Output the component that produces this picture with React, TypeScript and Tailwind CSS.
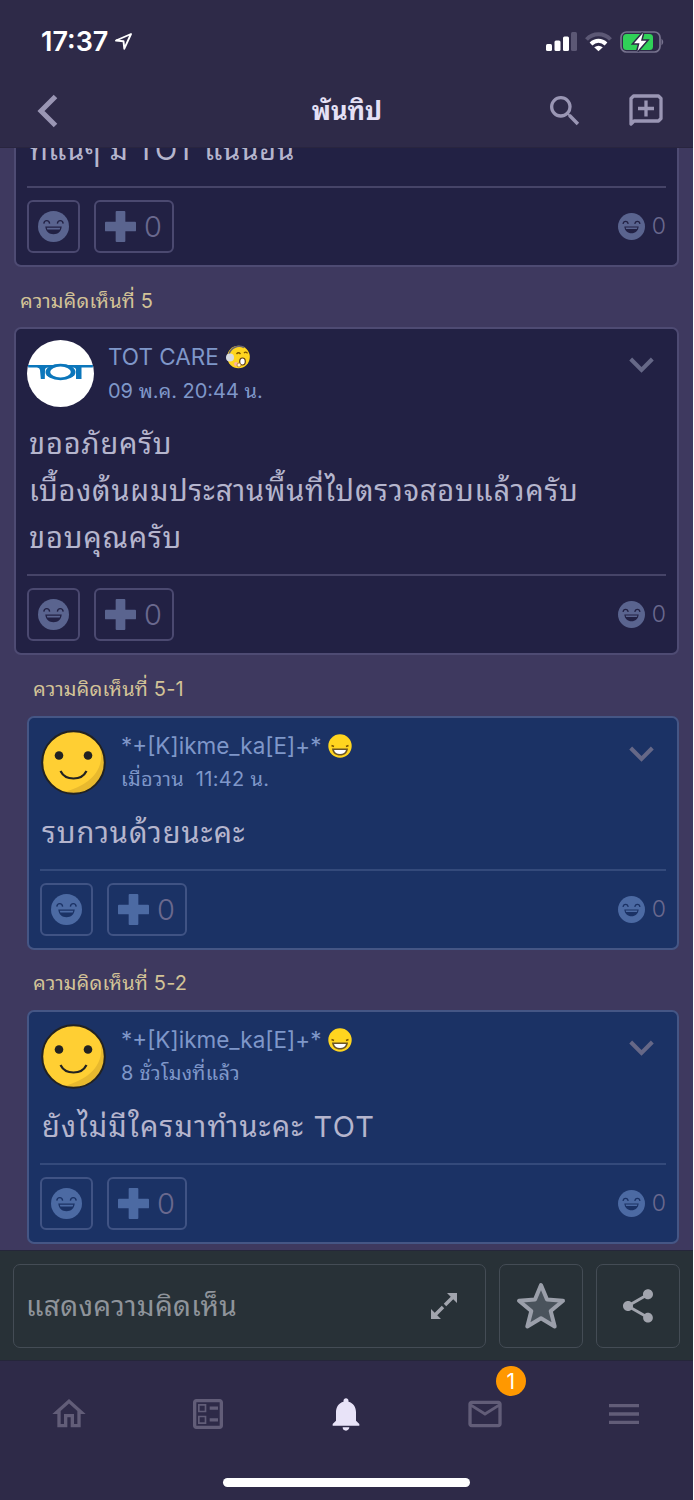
import type { ReactNode } from 'react';
import {
  MdExpandMore,
  MdMailOutline,
  MdMenu,
  MdNotifications,
  MdOutlineBallot,
  MdOutlineHome,
  MdSearch,
  MdShare,
} from 'react-icons/md';

type CommentProps = {
  label: string;
  name: string;
  time: string;
  lines: string[];
  avatar: ReactNode;
  badge: ReactNode;
  bodyClass: string;
  reply?: boolean;
};

function LaughIcon({ size, reply }: { size: number; reply?: boolean }) {
  const face = reply ? '#4c6aa3' : '#5a648f';
  const ink = reply ? '#1b3265' : '#222144';
  return (
    <svg width={size} height={size} viewBox="0 0 32 32" fill="none">
      <circle cx="16" cy="16" r="16" fill={face} />
      <path d="M6 13c.4-4 5.600-4 6 0M20 13c.4-4 5.600-4 6 0" stroke={ink} strokeWidth="1.400" />
      <path d="M7.500 16h17c-.5 5.200-4 8-8.500 8s-8-2.800-8.500-8z" fill={ink} />
      <path d="M9 17.300h14l-.6 1.800H9.600z" fill={face} />
    </svg>
  );
}

function PlusIcon({ reply }: { reply?: boolean }) {
  return (
    <svg width="31" height="31" viewBox="0 0 32 32" fill={reply ? '#4c6aa3' : '#5a648f'}>
      <path d="M12 0h8a1 1 0 0 1 1 1v10h10a1 1 0 0 1 1 1v8a1 1 0 0 1-1 1H21v10a1 1 0 0 1-1 1h-8a1 1 0 0 1-1-1V21H1a1 1 0 0 1-1-1v-8a1 1 0 0 1 1-1h10V1a1 1 0 0 1 1-1z" />
    </svg>
  );
}

function TotAvatar() {
  return (
    <svg width="67" height="67" viewBox="0 0 67 67">
      <circle cx="33.500" cy="33.500" r="33.500" fill="#fff" />
      <g fill="#0b76bb">
        <path d="M1 25h65l-.2 2.500H54.500V39H49V30q0-2.500-3-2.500H21q-3 0-3 2.500l-.2 9h-4L13 30q-.3-2.500-3-2.500H1.200z" />
        <ellipse cx="33.500" cy="32" rx="15" ry="8.300" />
      </g>
      <ellipse cx="33.500" cy="32" rx="10.300" ry="5.400" fill="#fff" />
    </svg>
  );
}

function SmileAvatar() {
  return (
    <svg width="67" height="67" viewBox="0 0 67 67">
      <circle cx="33.500" cy="33.500" r="31.300" fill="#ffcf33" />
      <path d="M60 18C66 42 48 57 24 63C42 68 64 55 64.500 34Q64 24 60 18z" fill="#e8b92e" />
      <circle cx="33.500" cy="33.500" r="31.300" fill="none" stroke="#222" strokeWidth="2" />
      <circle cx="19" cy="26.500" r="4.300" fill="#222" />
      <circle cx="48" cy="26.500" r="4.300" fill="#222" />
      <path d="M20.500 42c5 10 21 10 26 0" fill="none" stroke="#222" strokeWidth="2.200" />
    </svg>
  );
}

function GrinBadge() {
  return (
    <svg width="24" height="24" viewBox="0 0 24 24">
      <circle cx="12" cy="12" r="11.700" fill="#ffd51f" />
      <path d="M3.500 11.500l2.500 1M20.500 11.500l-2.500 1" stroke="#7a5200" strokeWidth="1.500" />
      <path d="M4 14.500h16c-.4 4.500-3.500 7-8 7s-7.600-2.500-8-7z" fill="#6b5526" />
      <path d="M6 16h12c-.7 2.700-2.600 4-6 4s-5.300-1.300-6-4z" fill="#fff" />
    </svg>
  );
}

function HeadsetBadge() {
  return (
    <svg width="24" height="24" viewBox="0 0 24 24">
      <circle cx="12.500" cy="12" r="11.300" fill="#ffd51f" />
      <path d="M3 9C5 2.500 12-.5 18 2.500" fill="none" stroke="#6a6470" strokeWidth="1.600" />
      <circle cx="4" cy="12.500" r="4" fill="#d8dbe2" />
      <path d="M10.500 9q2-2.500 4 0M18 8q2-2 3.500.3" fill="none" stroke="#7a5200" strokeWidth="1.300" />
      <circle cx="10" cy="19" r="2" fill="#f9b3a0" />
      <ellipse cx="16.500" cy="16.500" rx="2.800" ry="3.500" fill="#fff" stroke="#5b3a10" strokeWidth="1.200" />
      <circle cx="13" cy="20" r="2" fill="#fff0d0" stroke="#a87418" strokeWidth=".7" />
    </svg>
  );
}

function Reactions({ reply }: { reply?: boolean }) {
  const line = reply ? 'border-[#405384]' : 'border-[#4b4970]';
  return (
    <>
      <div className={`mt-[13px] h-0 border-t-2 ${reply ? 'border-[#344a7b]' : 'border-[#464468]'}`} />
      <div className="mt-3 flex h-[53px] items-center">
        <div className={`flex size-[53px] items-center justify-center rounded-[6px] border-2 ${line}`}>
          <LaughIcon size={31} reply={reply} />
        </div>
        <div className={`ml-[14px] flex h-[53px] w-[80px] items-center rounded-[6px] border-2 pl-[9px] ${line}`}>
          <PlusIcon reply={reply} />
          <span className="ml-[8px] text-[29px] leading-none font-light text-[#6a698e]">0</span>
        </div>
        <div className="ml-auto flex items-center gap-[7px]">
          <LaughIcon size={27} reply={reply} />
          <span className="text-[23px] leading-none font-light text-[#6a698e]">0</span>
        </div>
      </div>
    </>
  );
}

function Comment({ label, name, time, lines, avatar, badge, bodyClass, reply }: CommentProps) {
  return (
    <section className={reply ? 'ml-[27px]' : 'ml-[14px]'}>
      <h2 className="flex h-[60.33px] items-center pt-[7px] pl-[6px] text-[20px] tracking-[0.15px] text-[#d3c397]">
        {label}
      </h2>
      <article
        className={`rounded-[7px] border-2 px-[11px] pt-[11px] pb-3 ${
          reply ? 'border-[#455685] bg-[#1b3265]' : 'border-[#4e4b73] bg-[#222144]'
        }`}
      >
        <div className="flex h-[67px]">
          {avatar}
          <div className="ml-[14px] flex-1">
            <div className="flex h-[34px] items-center gap-[7px] text-[22.500px] text-[#7f97c9]">
              <span>{name}</span>
              {badge}
            </div>
            <div
              className={`flex h-[33px] items-center text-[20px] whitespace-pre text-[#7f97c9] ${
                reply ? 'tracking-[0.3px]' : ''
              }`}
            >
              {time}
            </div>
          </div>
          <MdExpandMore className="size-[49px] text-[#666887]" />
        </div>
        <div className={`mt-[13px] pl-[2px] text-[29px] leading-[47px] text-[#b5b5cd] ${bodyClass}`}>
          {lines.map((line) => (
            <p key={line} className="h-[47px] whitespace-nowrap">{line}</p>
          ))}
        </div>
        <Reactions reply={reply} />
      </article>
    </section>
  );
}

function StatusBar() {
  return (
    <div className="flex h-[76px] items-center pt-[7px] pr-[28px] pl-[41px] text-white">
      <span className="pt-[2px] text-[27px] font-semibold">17:37</span>
      <svg className="ml-[6px]" width="19" height="19" viewBox="0 0 19 19" fill="none" stroke="#fff" strokeWidth="1.900" strokeLinejoin="round">
        <path d="M17 2L2 8.500l7.500.7.8 7.500z" />
      </svg>
      <svg className="ml-auto" width="32" height="20" viewBox="0 0 32 20" fill="#fff">
        <rect x="0" y="12" width="6" height="7" rx="1.500" />
        <rect x="8.500" y="8.500" width="6" height="10.500" rx="1.500" />
        <rect x="17" y="4.500" width="6" height="14.500" rx="1.500" />
        <rect x="25" y="0" width="6" height="19" rx="1.500" fill="#5c5875" />
      </svg>
      <svg className="ml-[7px]" width="27" height="20" viewBox="0 0 27 20" fill="none" strokeWidth="4">
        <path d="M1.500 7.500C8 .6 19 .6 25.500 7.500" stroke="#5c5875" />
        <path d="M6 12c4.500-4.300 10.500-4.300 15 0" stroke="#fff" />
        <path d="M13.500 19.300l-4.300-4q4.300-3.200 8.600 0z" fill="#fff" stroke="none" />
      </svg>
      <svg className="ml-[8px]" width="45" height="22" viewBox="0 0 45 22">
        <rect x="1" y="1" width="39" height="20" rx="5.500" fill="none" stroke="#77738e" strokeWidth="1.700" />
        <rect x="3" y="3" width="30" height="16" rx="3.500" fill="#30d158" />
        <path d="M41.500 7.500q3.500 3.500 0 7z" fill="#77738e" />
        <path d="M23 2L14 12.300h5.500L17.500 20 26.500 9.700h-5.500z" fill="#fff" stroke="#2e2a48" strokeWidth="3" paintOrder="stroke" />
      </svg>
    </div>
  );
}

function TitleBar() {
  return (
    <div className="flex h-[70px] items-center justify-between pr-[27px] pl-[36px]">
      <svg className="mr-[91px]" width="22" height="34" viewBox="0 0 22 34" fill="none" stroke="#9a96b4" strokeWidth="5">
        <path d="M19.500 2.500L5 17l14.500 14.500" />
      </svg>
      <h1 className="text-[25.500px] leading-none font-bold whitespace-nowrap text-[#e4e0f5]">พันทิป</h1>
      <div className="flex items-center">
        <MdSearch className="size-[40px] text-[#9a96b4]" />
        <svg className="ml-[41px]" width="40" height="40" viewBox="0 0 40 40" fill="none" stroke="#9a96b4" strokeWidth="3.300">
          <path d="M5 33V7.500L7.500 5h25L35 7.500v20L32.500 30H8z" strokeLinejoin="round" />
          <path d="M20 9.500v16M12 17.500h16" />
        </svg>
      </div>
    </div>
  );
}

function CommentBar() {
  const box = 'flex h-[84px] items-center rounded-[7px] border border-[#444c55]';
  return (
    <div className="flex h-[111px] shrink-0 items-center gap-[13px] border-t border-b border-[#25263a] bg-[#283137] px-[13px]">
      <div className={`${box} w-[473px] justify-between pr-[27px] pl-[12px]`}>
        <span className="text-[28px] tracking-[0.35px] text-[#8f949b]">แสดงความคิดเห็น</span>
        <svg width="28" height="28" viewBox="0 0 28 28" fill="#a1a4ad" stroke="#a1a4ad">
          <path d="M17 1h10v10zM1 17v10h10z" stroke="none" />
          <path d="M22.500 5.500l-7.500 7.500M13 15l-7.500 7.500" strokeWidth="3.500" />
        </svg>
      </div>
      <div className={`${box} w-[84px] justify-center`}>
        <svg width="50" height="50" viewBox="0 0 50 50" fill="#4a535c" stroke="#9b9faa" strokeWidth="4" strokeLinejoin="round">
          <path d="M25 4l6 14.500 16 1.300-12.300 10.200 4 15.500L25 37.200 11.300 45.500l4-15.500L3 19.800l16-1.300z" />
        </svg>
      </div>
      <div className={`${box} w-[84px] justify-center`}>
        <MdShare className="size-[40px] text-[#a1a4ad]" />
      </div>
    </div>
  );
}

function TabBar() {
  const tabs = [MdOutlineHome, MdOutlineBallot, MdNotifications, MdMailOutline, MdMenu];
  return (
    <nav className="flex h-[139px] shrink-0 flex-col items-center bg-[#2e2a48]">
      <div className="grid w-full grid-cols-5 pt-[33px]">
        {tabs.map((Icon, i) => (
          <div key={i} className="relative flex justify-center">
            <Icon className={`size-[40px] ${i === 2 ? 'text-[#e8e3f8]' : 'text-[#625d78]'}`} />
            {i === 3 && (
              <span className="absolute -top-[28px] left-[80px] flex size-[30px] items-center justify-center rounded-full bg-[#ff9800] text-[21px] leading-none text-white">
                1
              </span>
            )}
          </div>
        ))}
      </div>
      <div className="mt-[44px] h-[9px] w-[247px] rounded-full bg-white" />
    </nav>
  );
}

export default function App() {
  return (
    <div className="h-[1500px] w-[694px] bg-white">
      <div className="flex h-full w-[693px] flex-col overflow-hidden bg-[#3e395f] font-['Inter','Noto_Sans_Thai_Looped','Thonburi','Loma','Waree','Garuda','Noto_Sans_Thai',sans-serif]">
        <header className="h-[148px] shrink-0 border-b border-[#29253f] bg-[#2e2a48]">
          <StatusBar />
          <TitleBar />
        </header>

        <main className="min-h-0 flex-1 overflow-hidden pr-[14px]">
          <article className="-mt-[22px] ml-[14px] rounded-b-[7px] border-2 border-t-0 border-[#4e4b73] bg-[#222144] px-[11px] pb-3">
            <p className="h-[47px] pl-[2px] text-[29px] leading-[47px] tracking-[0.35px] text-[#b5b5cd]">
              ที่แน่ๆ มี TOT แน่นอน
            </p>
            <Reactions />
          </article>
          <Comment
            label="ความคิดเห็นที่ 5"
            name="TOT CARE"
            time="09 พ.ค. 20:44 น."
            lines={['ขออภัยครับ', 'เบื้องต้นผมประสานพื้นที่ไปตรวจสอบแล้วครับ', 'ขอบคุณครับ']}
            avatar={<TotAvatar />}
            badge={<HeadsetBadge />}
            bodyClass="tracking-[0.8px]"
          />
          <Comment
            reply
            label="ความคิดเห็นที่ 5-1"
            name="*+[K]ikme_ka[E]+*"
            time="เมื่อวาน  11:42 น."
            lines={['รบกวนด้วยนะคะ']}
            avatar={<SmileAvatar />}
            badge={<GrinBadge />}
            bodyClass="tracking-[1px]"
          />
          <Comment
            reply
            label="ความคิดเห็นที่ 5-2"
            name="*+[K]ikme_ka[E]+*"
            time="8 ชั่วโมงที่แล้ว"
            lines={['ยังไม่มีใครมาทำนะคะ TOT']}
            avatar={<SmileAvatar />}
            badge={<GrinBadge />}
            bodyClass="tracking-[1.2px]"
          />
        </main>

        <CommentBar />
        <TabBar />
      </div>
    </div>
  );
}
